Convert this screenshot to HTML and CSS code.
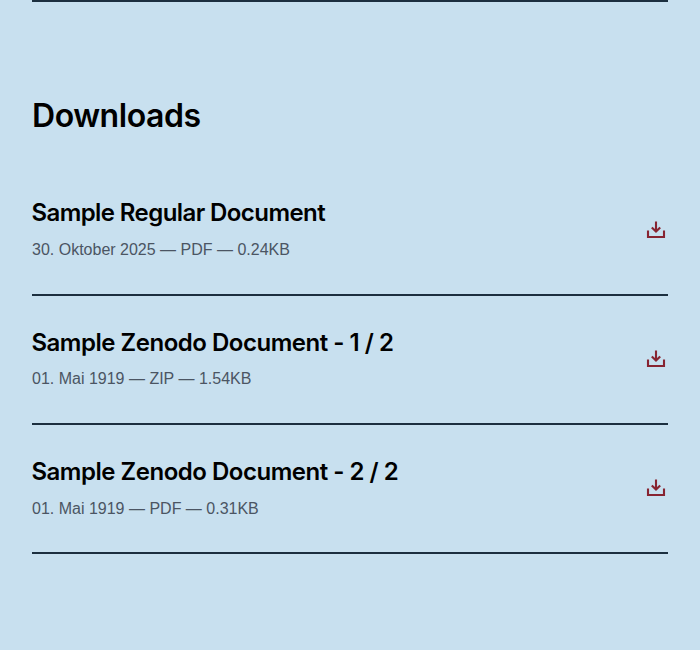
FILE: index.html
```
<!DOCTYPE html>
<html lang="de">
<head>
<meta charset="utf-8">
<title>Downloads</title>
<link rel="stylesheet" href="styles.css">
</head>
<body>
<main class="page">
<section class="downloads">
<h2 class="heading">Downloads</h2>
<ul class="list">
<li class="item item-regular">
<div class="text"><h3 class="title">Sample Regular Document</h3><p class="meta">30. Oktober 2025 — PDF — 0.24KB</p></div>
<svg class="icon" viewBox="0 0 24 24"><path d="M12 3.5V13.5M7.8 9.4l4.2 4.2 4.2-4.2M4 12.5V19h16v-6.5"/></svg>
</li>
<li class="item item-zip">
<div class="text"><h3 class="title">Sample Zenodo Document - 1 / 2</h3><p class="meta">01. Mai 1919 — ZIP — 1.54KB</p></div>
<svg class="icon" viewBox="0 0 24 24"><path d="M12 3.5V13.5M7.8 9.4l4.2 4.2 4.2-4.2M4 12.5V19h16v-6.5"/></svg>
</li>
<li class="item">
<div class="text"><h3 class="title">Sample Zenodo Document - 2 / 2</h3><p class="meta">01. Mai 1919 — PDF — 0.31KB</p></div>
<svg class="icon" viewBox="0 0 24 24"><path d="M12 3.5V13.5M7.8 9.4l4.2 4.2 4.2-4.2M4 12.5V19h16v-6.5"/></svg>
</li>
</ul>
</section>
</main>
</body>
</html>
```
FILE: styles.css
```
* { box-sizing: border-box; margin: 0; padding: 0; }
body { background: #c8e0ef; color: #000; font-family: "Liberation Sans", Arial, sans-serif; }
.page { padding: 0 32px; }
.downloads { border-top: 2px solid #1c2f3f; padding-top: 94px; }
.heading { font: 600 32px/40px Inter, "Liberation Sans", sans-serif; letter-spacing: -0.45px; }
.list { list-style: none; margin-top: 31px; }
.item { display: flex; align-items: center; justify-content: space-between; height: 129px; border-bottom: 2px solid #1c2f3f; }
.title { margin-left: -0.6px; font: 600 24px/32px Inter, "Liberation Sans", sans-serif; letter-spacing: -0.48px; white-space: nowrap; }
.meta { margin-top: 9px; font-size: 16px; line-height: 24px; color: #4b5563; }
.item-regular .text { padding-bottom: 2px; }
.item-regular .title { letter-spacing: -0.58px; }
.item-zip .text { padding-bottom: 1px; }
.item-zip .meta { margin-top: 8px; }
.icon { width: 24px; height: 24px; margin-bottom: 2px; fill: none; stroke: #872431; stroke-width: 2.1; }
```
